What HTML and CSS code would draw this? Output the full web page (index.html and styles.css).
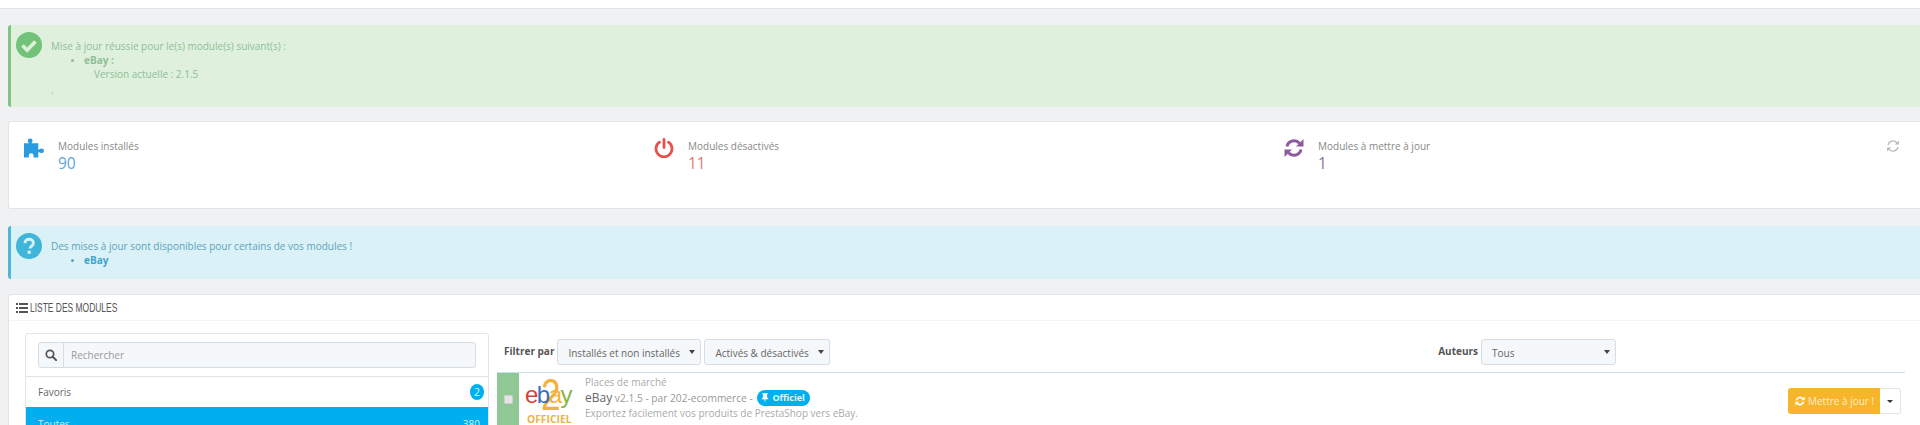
FILE: index.html
```html
<!DOCTYPE html>
<html lang="fr">
<head>
<meta charset="utf-8">
<title>Modules</title>
<link rel="stylesheet" href="styles.css">
</head>
<body>
<div class="topbar"></div>
<main class="content">
  <section class="alert alert-success">
    <svg class="alert-icon" viewBox="0 0 26 26"><circle cx="13" cy="13" r="13" fill="#72c279"/><path d="M6.500 13.500l4.600 4.600 8.400-8.600" fill="none" stroke="#dff0d8" stroke-width="3.600"/></svg>
    <div class="alert-text">
      <p>Mise à jour réussie pour le(s) module(s) suivant(s) :</p>
      <ul><li><b>eBay :</b><div class="version">Version actuelle : 2.1.5</div></li></ul>
      <p class="dot">.</p>
    </div>
  </section>

  <section class="panel stats">
    <div class="stat">
      <svg class="stat-icon" viewBox="0 0 21 20"><g fill="#2b9be0"><path d="M0 5h15v15h-5v-2a2.500 2.500 0 0 0-5 0v2H0z"/><circle cx="6.500" cy="2.500" r="2.500"/><rect x="5" y="3" width="3" height="3"/><circle cx="18.500" cy="13" r="2.500"/><rect x="14" y="11.500" width="3" height="3"/></g></svg>
      <div><div class="stat-label">Modules installés</div><div class="stat-value blue">90</div></div>
    </div>
    <div class="stat">
      <svg class="stat-icon" viewBox="0 0 20 20"><path fill="none" stroke="#e8504c" stroke-width="2.800" stroke-linecap="round" d="M5.500 4.200a8 8 0 1 0 9 0M10 1.500v8"/></svg>
      <div><div class="stat-label">Modules désactivés</div><div class="stat-value red">11</div></div>
    </div>
    <div class="stat">
      <svg class="stat-icon" viewBox="0 0 20 20"><g fill="none" stroke="#8e5a9e" stroke-width="3"><path d="M3 8.500a7.200 7.200 0 0 1 12.500-3.300"/><path d="M17 11.500a7.200 7.200 0 0 1-12.500 3.300"/></g><path fill="#8e5a9e" d="M19.500 1v7.500H12zM.5 19v-7.500H8z"/></svg>
      <div><div class="stat-label">Modules à mettre à jour</div><div class="stat-value purple">1</div></div>
    </div>
    <svg class="refresh" viewBox="0 0 20 20"><g fill="none" stroke="#bbb" stroke-width="2"><path d="M3 8.500a7.200 7.200 0 0 1 12.500-3.300"/><path d="M17 11.500a7.200 7.200 0 0 1-12.500 3.300"/></g><path fill="#bbb" d="M18.500 2v6H12.500zM1.500 18v-6H7.500z"/></svg>
  </section>

  <section class="alert alert-info">
    <svg class="alert-icon" viewBox="0 0 26 26"><circle cx="13" cy="13" r="13" fill="#3fb5d8"/><path d="M9 10.200c0-5.200 8.300-5.200 8.300 0 0 3-3.200 2.900-3.200 5.300" fill="none" stroke="#d9f0f8" stroke-width="3"/><rect x="11.600" y="17.600" width="3.200" height="3.200" fill="#d9f0f8"/></svg>
    <div class="alert-text">
      <p>Des mises à jour sont disponibles pour certains de vos modules !</p>
      <ul><li><b>eBay</b></li></ul>
    </div>
  </section>

  <section class="panel modules">
    <h3 class="panel-head">
      <svg class="list-icon" viewBox="0 0 12 10"><path fill="#555" d="M0 0h2v2H0zM3 0h9v2H3zM0 4h2v2H0zM3 4h9v2H3zM0 8h2v2H0zM3 8h9v2H3z"/></svg>
      <span>LISTE DES MODULES</span>
    </h3>
    <div class="modules-body">
      <aside class="sidebar">
        <div class="search">
          <div class="search-box">
            <span class="search-addon"><svg viewBox="0 0 14 14"><circle cx="5.800" cy="5.800" r="4.300" fill="none" stroke="#555" stroke-width="2"/><path d="M9 9l4 4" stroke="#555" stroke-width="2.400" stroke-linecap="round"/></svg></span>
            <span class="search-input">Rechercher</span>
          </div>
        </div>
        <div class="cat"><span>Favoris</span><span class="badge">2</span></div>
        <div class="cat cat-active"><span>Toutes</span><span>380</span></div>
      </aside>
      <div class="list">
        <div class="filters">
          <span class="filter-label">Filtrer par</span>
          <span class="select select-a">Installés et non installés</span>
          <span class="select select-b">Activés &amp; désactivés</span>
          <span class="spacer"></span>
          <span class="filter-label">Auteurs</span>
          <span class="select select-c">Tous</span>
        </div>
        <div class="module">
          <div class="module-check"><span class="checkbox"></span></div>
          <div class="logo">
            <div class="logo-mark"><span class="two">2</span><span class="e1">e</span><span class="b1">b</span><span class="a1">a</span><span class="y1">y</span></div>
            <div class="logo-sub">OFFICIEL</div>
          </div>
          <div class="module-info">
            <div class="cat-name">Places de marché</div>
            <div class="module-title"><span class="name">eBay</span> v2.1.5 - par 202-ecommerce - <span class="official"><svg viewBox="0 0 10 12"><path fill="#fff" d="M1.500 0h7v1.200H7.600v4L9.500 7.500H5.800L5 12l-.8-4.500H.5l1.900-2.300v-4H1.500z"/></svg>Officiel</span></div>
            <div class="module-desc">Exportez facilement vos produits de PrestaShop vers eBay.</div>
          </div>
          <div class="actions">
            <span class="btn-update"><svg viewBox="0 0 20 20"><g fill="none" stroke="#fff" stroke-width="3.400"><path d="M3 8.500a7.200 7.200 0 0 1 12.500-3.300"/><path d="M17 11.500a7.200 7.200 0 0 1-12.500 3.300"/></g><path fill="#fff" d="M19.500 1v7.500H12zM.5 19v-7.500H8z"/></svg>Mettre à jour !</span><span class="btn-caret"></span>
          </div>
        </div>
      </div>
    </div>
  </section>
</main>
</body>
</html>
```
FILE: styles.css
```css
* { box-sizing: border-box; }
html, body { margin: 0; height: 425px; overflow: hidden; }
body { background: #eff1f2; font-family: "Open Sans", "Liberation Sans", sans-serif; font-size: 10px; color: #666; }
p, ul, h3 { margin: 0; padding: 0; }

.topbar { height: 9px; background: #fff; border-bottom: 1px solid #e4e4e4; }
.content { display: flex; flex-direction: column; padding: 16px 0 0 8px; }

.alert { display: flex; border-left: 3px solid; border-radius: 3px 0 0 3px; padding: 7px 0 0 5px; }
.alert-icon { width: 26px; height: 26px; flex: none; margin-right: 9px; }
.alert-text { padding-top: 7px; line-height: 14px; font-size: 10px; }
.alert ul { list-style: disc; padding-left: 33px; }
.alert li::marker { font-size: 8px; }
.alert b { font-weight: 700; }
.alert-success { height: 82px; background: #dff0dd; border-color: #7fc387; color: #8ebf96; }
.alert-success .version { padding-left: 10px; }
.alert-success .dot { padding-top: 2px; }
.alert-info { height: 53px; background: #daf1f8; border-color: #4fb8d8; color: #5fa3b8; }
.alert-info .alert-text { padding-top: 6px; }
.alert-info b { color: #3aa6ca; }

.panel { background: #fff; border: 1px solid #e4e4e4; border-right: 0; border-radius: 3px 0 0 3px; }
.stats { height: 88px; margin: 14px 0 17px; display: grid; grid-template-columns: 630px 630px 1fr; padding: 13px 0 0 15px; position: relative; }
.stat { display: flex; align-items: flex-start; }
.stat-icon { width: 20px; height: 20px; flex: none; margin: 3px 14px 0 0; }
.stat-label { font-size: 10px; line-height: 14px; color: #888; margin-top: 4px; }
.stat-value { font-size: 15.500px; line-height: 20px; }
.blue { color: #5fa6d2; }
.red { color: #e07a72; }
.purple { color: #8b6f9c; }
.refresh { position: absolute; right: 20px; top: 17px; width: 14px; height: 14px; }

.modules { height: 140px; margin-top: 15px; }
.panel-head { display: flex; align-items: center; height: 26px; border-bottom: 1px solid #f4f4f4; padding: 0 0 0 7px; font-family: "Liberation Sans", sans-serif; font-size: 13px; font-weight: 400; color: #555; }
.panel-head span { display: inline-block; transform: scaleX(.65); transform-origin: left; white-space: nowrap; }
.list-icon { width: 12px; height: 10px; margin-right: 2px; flex: none; }
.modules-body { display: flex; padding: 12px 0 0 16px; }

.sidebar { width: 464px; height: 110px; flex: none; background: #fff; border: 1px solid #e4e4e4; border-radius: 3px 3px 0 0; }
.search { height: 43px; padding: 8px 12px 0; border-bottom: 1px solid #e4e4e4; }
.search-box { display: flex; height: 26px; background: #f4f8fa; border: 1px solid #d6dee3; border-radius: 3px; }
.search-addon { width: 25px; display: flex; align-items: center; justify-content: center; border-right: 1px solid #d6dee3; }
.search-addon svg { width: 12px; height: 12px; }
.search-input { padding-left: 7px; line-height: 24px; font-size: 10px; color: #999; }
.cat { display: flex; justify-content: space-between; align-items: center; height: 30px; padding: 0 4px 0 12px; font-size: 10px; color: #666; }
.badge { width: 14px; height: 16px; border-radius: 50%; background: #00aff0; color: #d8f1fb; text-align: center; line-height: 16px; font-size: 10.500px; }
.cat-active { background: #00aff0; color: #cdeefb; padding-right: 8px; align-items: flex-start; padding-top: 10px; }

.list { flex: 1; padding: 6px 15px 0 8px; }
.filters { display: flex; align-items: flex-start; height: 34px; border-bottom: 1px solid #c6dfeb; padding: 0 289px 7px 7px; }
.filter-label { font-weight: 700; font-size: 10px; line-height: 24px; color: #555; margin-right: 3px; }
.select { position: relative; display: block; height: 26px; line-height: 26px; padding-left: 10px; margin-right: 3px; background: #f4f8fa; border: 1px solid #d6dee3; border-radius: 3px; font-size: 10px; color: #666; }
.select::after { content: ""; position: absolute; right: 5px; top: 10px; border: 3px solid transparent; border-top: 4px solid #444; border-bottom: 0; }
.select-a { width: 144px; }
.select-b { width: 126px; }
.select-c { width: 135px; margin-right: 0; }
.spacer { flex: 1; }

.module { display: flex; height: 53px; }
.module-check { width: 22px; flex: none; background: #8fc795; display: flex; justify-content: center; padding-top: 22px; }
.checkbox { width: 9px; height: 9px; background: #e4e4e4; border: 1px solid #cfcfcf; border-radius: 1px; }
.logo { width: 66px; flex: none; padding: 6px 0 0 6px; }
.logo-mark { position: relative; height: 35px; width: 48px; font-family: "Liberation Sans", sans-serif; font-size: 24px; line-height: 24px; letter-spacing: -1.500px; padding-top: 4px; white-space: nowrap; }
.logo-mark span { position: relative; }
.logo-mark .two { position: absolute; left: 16px; top: -6px; font-size: 44px; line-height: 44px; color: #f3b23a; transform: scaleX(.8); transform-origin: left; }
.e1 { color: #d9403a; }
.b1 { color: #3a6fc0; }
.a1 { color: #f3b23a; }
.y1 { color: #8ab63f; }
.logo-sub { font-size: 10.300px; font-weight: 700; line-height: 11px; color: #e9b44c; margin-left: 2px; white-space: nowrap; }
.module-info { flex: 1; padding-top: 3px; }
.cat-name { font-size: 10px; line-height: 13px; color: #aaa; }
.module-title { display: flex; align-items: center; height: 17px; font-size: 10.200px; color: #999; white-space: pre; }
.name { font-size: 12px; color: #666; }
.official { display: inline-flex; align-items: center; height: 16px; padding: 0 5px 0 4px; margin-left: 2px; border-radius: 8px; background: #00aff0; color: #e4f6fd; font-size: 9px; font-weight: 700; }
.official svg { width: 8px; height: 10px; margin-right: 3px; }
.module-desc { font-size: 10px; line-height: 14px; color: #aaa; }
.actions { display: flex; align-items: flex-start; padding-top: 15px; margin-right: 4px; }
.btn-update { display: flex; align-items: center; height: 26px; width: 92px; padding-left: 7px; background: #f7b52c; border-radius: 3px 0 0 3px; color: #fdeccb; font-size: 10px; }
.btn-update svg { width: 10px; height: 10px; margin-right: 3px; }
.btn-caret { position: relative; display: block; width: 21px; height: 26px; background: #fff; border: 1px solid #e4e4e4; border-left: 0; border-radius: 0 3px 3px 0; }
.btn-caret::after { content: ""; position: absolute; left: 7px; top: 11px; border: 3px solid transparent; border-top: 3px solid #333; border-bottom: 0; }
```
